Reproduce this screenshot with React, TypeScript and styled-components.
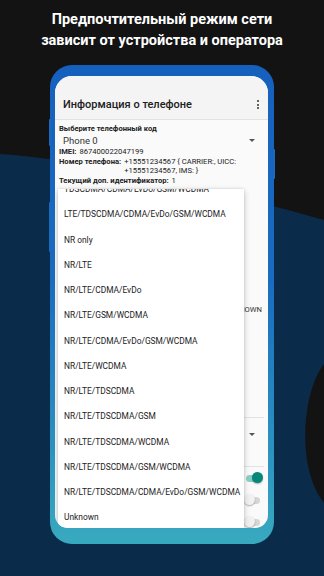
import React from "react";
import styled, { createGlobalStyle } from "styled-components";

const GlobalStyle = createGlobalStyle`
  html, body {
    margin: 0;
    padding: 0;
    background: #131313;
  }
  body {
    font-family: Roboto, "Noto Sans", Arial, sans-serif;
  }
`;

const Page = styled.div`
  position: relative;
  width: 324px;
  height: 576px;
  overflow: hidden;
  background: #131313;
`;

const Backdrop = styled.svg`
  position: absolute;
  inset: 0;
  width: 324px;
  height: 576px;
`;

const Content = styled.div`
  position: relative;
  display: flex;
  flex-direction: column;
  align-items: center;
`;

const Headline = styled.h1`
  margin: 9px 0 0;
  color: #ffffff;
  font-size: 14.5px;
  font-weight: 700;
  line-height: 21px;
  text-align: center;
`;

const Frame = styled.div`
  position: relative;
  margin-top: 14px;
  width: 224px;
  height: 479px;
  box-sizing: border-box;
  padding: 11px 6px 16px 5px;
  border-radius: 22px;
  background: linear-gradient(180deg, #1660bd 0%, #1a6cc0 45%, #2b92c0 80%, #38aabf 100%);
`;

type TSideKey = {
  readonly side: "left" | "right";
  readonly top: number;
  readonly len: number;
};

const SideKey = styled.span<TSideKey>`
  position: absolute;
  ${p => p.side}: -1px;
  top: ${p => p.top}px;
  width: 2px;
  height: ${p => p.len}px;
  border-radius: 1px;
  background: #1b68bf;
`;

const Screen = styled.div`
  position: relative;
  height: 100%;
  border-radius: 17px 17px 13px 13px;
  overflow: hidden;
  background: #fafafa;
  color: #212121;
`;

const AppBar = styled.div`
  height: 44px;
  box-sizing: border-box;
  padding-top: 14px;
  background: #f4f4f4;
  border-bottom: 1px solid #e2e2e2;
  display: flex;
  align-items: center;
  justify-content: space-between;
  padding-left: 8px;
  padding-right: 6px;
`;

const Title = styled.div`
  font-size: 11px;
  font-weight: 500;
  color: #202020;
`;

const MenuDots = styled.div`
  display: flex;
  flex-direction: column;
  gap: 1.5px;
  padding: 0 3px;

  span {
    width: 2px;
    height: 2px;
    border-radius: 50%;
    background: #333;
  }
`;

const Body = styled.div`
  padding: 4px 4px 0 4px;
  display: flex;
  flex-direction: column;
`;

const Label = styled.div`
  font-size: 7.6px;
  font-weight: 700;
  line-height: 10px;
  color: #222;
`;

const SelectRow = styled.div`
  height: 13px;
  display: flex;
  align-items: center;
  justify-content: space-between;
  padding-left: 4px;
  padding-right: 9px;
  font-size: 9.5px;
  color: #333;
`;

const Caret = styled.span`
  width: 0;
  height: 0;
  border-left: 3px solid transparent;
  border-right: 3px solid transparent;
  border-top: 3px solid #555;
`;

const InfoLine = styled.div`
  display: flex;
  font-size: 7.6px;
  line-height: 9.6px;
  color: #222;

  b {
    font-weight: 700;
    margin-right: 3px;
    white-space: nowrap;
  }
`;

const HiddenRow = styled.div<{ gap?: number }>`
  display: flex;
  justify-content: space-between;
  margin-top: ${p => p.gap ?? 0}px;
  padding-right: 2px;
  font-size: 7.6px;
  line-height: 10px;
  color: #333;
`;

const Divider = styled.div<{ gap?: number }>`
  height: 1px;
  background: #e3e3e3;
  margin-top: ${p => p.gap ?? 0}px;
`;

const SpinnerBlock = styled.div`
  height: 48px;
  display: flex;
  justify-content: flex-end;
  padding: 15px 9px 0 0;
  box-sizing: border-box;
`;

const SwitchRow = styled.div`
  height: 22px;
  display: flex;
  align-items: center;
  justify-content: space-between;
  font-size: 7.6px;
  color: #333;
  padding-right: 4px;
`;

const Track = styled.span<{ on: boolean }>`
  position: relative;
  width: 14px;
  height: 7px;
  border-radius: 4px;
  background: ${p => (p.on ? "#8ccfc6" : "#d6d6d6")};
`;

const Knob = styled.span<{ on: boolean }>`
  position: absolute;
  top: -2.5px;
  ${p => (p.on ? "right: -3px;" : "left: -2px;")}
  width: 11px;
  height: 11px;
  border-radius: 50%;
  background: ${p => (p.on ? "#05877a" : "#f1f1f1")};
  box-shadow: 0 1px 1.5px rgba(0, 0, 0, 0.3);
`;

const Popup = styled.div`
  position: absolute;
  top: 113px;
  left: 3px;
  width: 186px;
  bottom: 0;
  overflow: hidden;
  background: #ffffff;
  box-shadow: 0 2px 6px rgba(0, 0, 0, 0.22), 0 0 2px rgba(0, 0, 0, 0.12);
`;

const OptionList = styled.ul`
  list-style: none;
  margin: -12.6px 0 0;
  padding: 0;
`;

const Option = styled.li`
  height: 25.25px;
  display: flex;
  align-items: center;
  padding-left: 6px;
  font-size: 8.4px;
  color: #222;
  white-space: nowrap;
`;

const options = [
  "TDSCDMA/CDMA/EvDo/GSM/WCDMA",
  "LTE/TDSCDMA/CDMA/EvDo/GSM/WCDMA",
  "NR only",
  "NR/LTE",
  "NR/LTE/CDMA/EvDo",
  "NR/LTE/GSM/WCDMA",
  "NR/LTE/CDMA/EvDo/GSM/WCDMA",
  "NR/LTE/WCDMA",
  "NR/LTE/TDSCDMA",
  "NR/LTE/TDSCDMA/GSM",
  "NR/LTE/TDSCDMA/WCDMA",
  "NR/LTE/TDSCDMA/GSM/WCDMA",
  "NR/LTE/TDSCDMA/CDMA/EvDo/GSM/WCDMA",
  "Unknown",
];

const Switch = ({ on }: { on: boolean }) => (
  <Track on={on}>
    <Knob on={on} />
  </Track>
);

export default function App() {
  return (
    <Page>
      <GlobalStyle />
      <Backdrop viewBox="0 0 324 576">
        <path d="M0 154 C 90 160, 210 188, 324 220 L324 576 L0 576 Z" fill="#0b2b4b" />
        <path d="M324 364 C 302 392, 296 468, 324 503 Z" fill="#131313" />
      </Backdrop>
      <Content>
        <Headline>
          Предпочтительный режим сети
          <br />
          зависит от устройства и оператора
        </Headline>
        <Frame>
          <SideKey side="left" top={54} len={27} />
          <SideKey side="left" top={137} len={50} />
          <SideKey side="right" top={84} len={30} />
          <Screen>
            <AppBar>
              <Title>Информация о телефоне</Title>
              <MenuDots>
                <span />
                <span />
                <span />
              </MenuDots>
            </AppBar>
            <Body>
              <Label>Выберите телефонный код</Label>
              <SelectRow>
                Phone 0
                <Caret />
              </SelectRow>
              <InfoLine>
                <b>IMEI:</b> 867400022047199
              </InfoLine>
              <InfoLine>
                <b>Номер телефона:</b>
                <span>+15551234567 {"{"} CARRIER:, UICC: +15551234567, IMS: {"}"}</span>
              </InfoLine>
              <InfoLine>
                <b>Текущий доп. идентификатор:</b> 1
              </InfoLine>
              <HiddenRow gap={120}>
                <span>Тип голосовой сети:</span>
                <span>UNKNOWN</span>
              </HiddenRow>
              <Divider gap={102} />
              <SpinnerBlock>
                <Caret />
              </SpinnerBlock>
              <Divider />
              <SwitchRow>
                <span>Мобильное радио</span>
                <Switch on />
              </SwitchRow>
              <SwitchRow>
                <span>Регистрация IMS</span>
                <Switch on={false} />
              </SwitchRow>
              <SwitchRow>
                <span>VoLTE</span>
                <Switch on={false} />
              </SwitchRow>
            </Body>
            <Popup>
              <OptionList>
                {options.map(o => (
                  <Option key={o}>{o}</Option>
                ))}
              </OptionList>
            </Popup>
          </Screen>
        </Frame>
      </Content>
    </Page>
  );
}
